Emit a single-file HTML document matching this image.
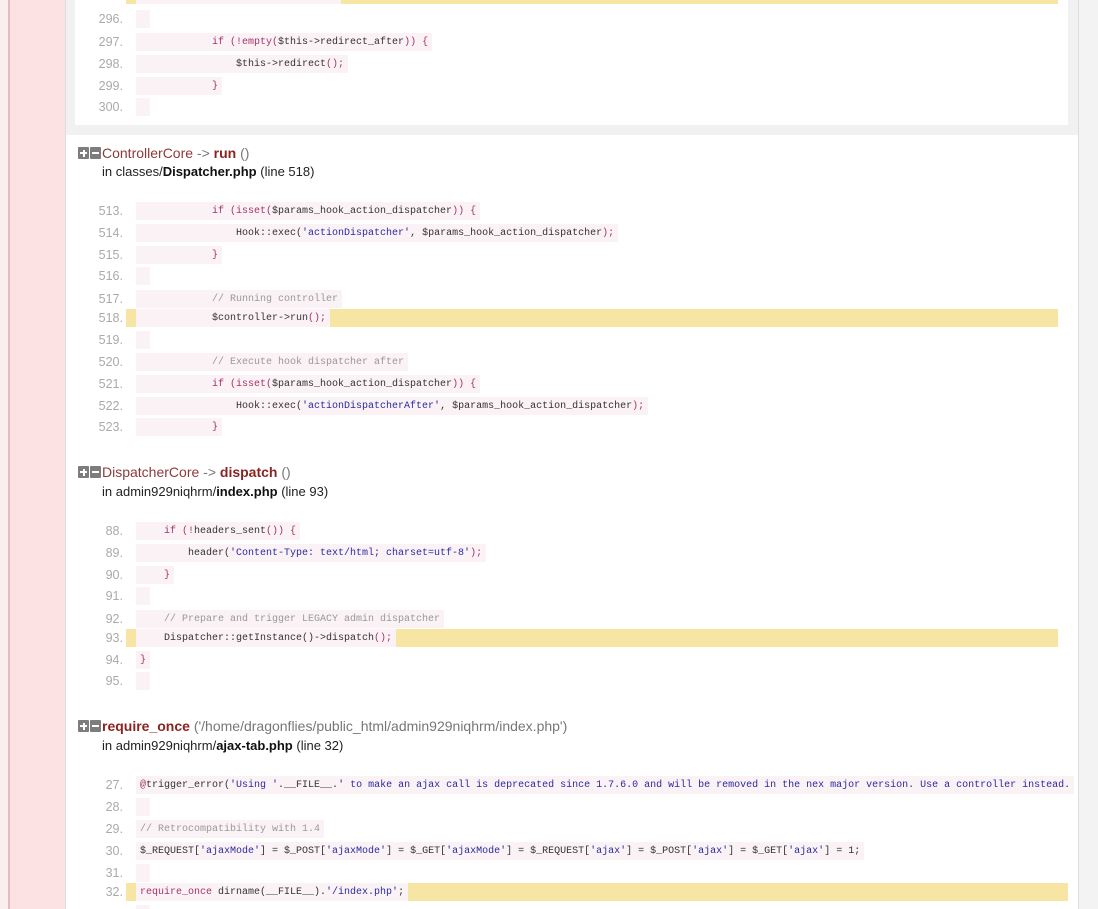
<!DOCTYPE html>
<html style="overflow:hidden"><head><meta charset="utf-8"><style>
*{margin:0;padding:0;box-sizing:border-box}
html,body{width:1098px;height:909px;overflow:hidden}
body{background:#f3f3f3;font-family:"Liberation Sans",Arial,sans-serif;position:relative}
.strip0{position:absolute;left:0;top:0;width:8px;height:909px;background:#fbeeee}
.strip1{position:absolute;left:8px;top:0;width:2px;height:909px;background:#e9b9bc}
.strip2{position:absolute;left:10px;top:0;width:55px;height:909px;background:#fde2e3}
.main{position:absolute;left:65px;top:0;width:1014px;height:909px;background:#fff;border-left:1px solid #ddd;border-right:1px solid #ddd}
.topgray{position:absolute;left:66px;top:0;width:1012px;height:135px;background:#f1f1f1}
.topwhite{position:absolute;left:75px;top:0;width:993px;height:125px;background:#fff}
.ln{position:absolute;left:0;height:18px;width:1098px;margin-top:2px}
.num{position:absolute;left:60px;width:63px;text-align:right;font-size:12.5px;color:#aaa;top:2px;font-family:"Liberation Sans",Arial,sans-serif}
.hl{position:absolute;left:126px;top:0;height:18px;background:#f7e5a3}
.code{position:absolute;left:136px;top:0;height:18px;line-height:19px;padding:0 4px;background:#faf2f4;font-family:"Liberation Mono",monospace;font-size:10px;color:#333;white-space:pre}
.k{color:#a5336c}.s{color:#2b2ba0}.c{color:#999}
.hd{position:absolute;left:78px;font-size:14px;color:#8e3a3a;white-space:nowrap}
.hd b{color:#8b2323}.hd .g{color:#777}
.icon{display:inline-block;width:23px;height:12px;vertical-align:-1px;margin-right:1px;position:relative}
.icon i{position:absolute;top:0;width:11px;height:12px;background:#7d7d7d;border-radius:1px}
.icon i.a{left:0}.icon i.b{left:12px}
.icon i.a:before{content:"";position:absolute;left:2px;top:5px;width:7px;height:2px;background:#fff}
.icon i.a:after{content:"";position:absolute;left:4.5px;top:2.5px;width:2px;height:7px;background:#fff}
.icon i.b:before{content:"";position:absolute;left:2px;top:5px;width:7px;height:2px;background:#fff}
.fl{position:absolute;left:102px;font-size:13px;color:#222;white-space:nowrap}
.fl b{color:#111}
</style></head><body>
<div class="strip0"></div><div class="strip1"></div><div class="strip2"></div>
<div class="main"></div>
<div class="topgray"></div><div class="topwhite"></div>

<div class="ln" style="top:-16px"><div class="hl" style="width:932px"></div><div class="code" style="width:205px"> </div></div>
<div class="ln" style="top:8px"><span class="num">296.</span><div class="code"> </div></div>
<div class="ln" style="top:31px"><span class="num">297.</span><div class="code"><span class="k">            if (!empty(</span>$this-&gt;redirect_after<span class="k">)) {</span></div></div>
<div class="ln" style="top:53px"><span class="num">298.</span><div class="code">                $this-&gt;redirect<span class="k">();</span></div></div>
<div class="ln" style="top:75px"><span class="num">299.</span><div class="code"><span class="k">            }</span></div></div>
<div class="ln" style="top:96px"><span class="num">300.</span><div class="code"> </div></div>

<div class="hd" style="top:145px"><span class="icon"><i class="a"></i><i class="b"></i></span>ControllerCore<span class="g"> -&gt; </span><b>run</b><span class="g"> ()</span></div>
<div class="fl" style="top:164px">in classes/<b>Dispatcher.php</b> (line 518)</div>

<div class="ln" style="top:200px"><span class="num">513.</span><div class="code"><span class="k">            if (isset(</span>$params_hook_action_dispatcher<span class="k">)) {</span></div></div>
<div class="ln" style="top:222px"><span class="num">514.</span><div class="code">                Hook::exec(<span class="s">'actionDispatcher'</span>, $params_hook_action_dispatcher<span class="k">);</span></div></div>
<div class="ln" style="top:244px"><span class="num">515.</span><div class="code"><span class="k">            }</span></div></div>
<div class="ln" style="top:265px"><span class="num">516.</span><div class="code"> </div></div>
<div class="ln" style="top:288px"><span class="num">517.</span><div class="code"><span class="c">            // Running controller</span></div></div>
<div class="ln" style="top:307px"><span class="num">518.</span><div class="hl" style="width:932px"></div><div class="code">            $controller-&gt;run<span class="k">();</span></div></div>
<div class="ln" style="top:329px"><span class="num">519.</span><div class="code"> </div></div>
<div class="ln" style="top:351px"><span class="num">520.</span><div class="code"><span class="c">            // Execute hook dispatcher after</span></div></div>
<div class="ln" style="top:373px"><span class="num">521.</span><div class="code"><span class="k">            if (isset(</span>$params_hook_action_dispatcher<span class="k">)) {</span></div></div>
<div class="ln" style="top:395px"><span class="num">522.</span><div class="code">                Hook::exec(<span class="s">'actionDispatcherAfter'</span>, $params_hook_action_dispatcher<span class="k">);</span></div></div>
<div class="ln" style="top:416px"><span class="num">523.</span><div class="code"><span class="k">            }</span></div></div>

<div class="hd" style="top:464px"><span class="icon"><i class="a"></i><i class="b"></i></span>DispatcherCore<span class="g"> -&gt; </span><b>dispatch</b><span class="g"> ()</span></div>
<div class="fl" style="top:484px">in admin929niqhrm/<b>index.php</b> (line 93)</div>

<div class="ln" style="top:520px"><span class="num">88.</span><div class="code"><span class="k">    if (!</span>headers_sent<span class="k">()) {</span></div></div>
<div class="ln" style="top:542px"><span class="num">89.</span><div class="code">        header(<span class="s">'Content-Type: text/html; charset=utf-8'</span><span class="k">);</span></div></div>
<div class="ln" style="top:564px"><span class="num">90.</span><div class="code"><span class="k">    }</span></div></div>
<div class="ln" style="top:585px"><span class="num">91.</span><div class="code"> </div></div>
<div class="ln" style="top:608px"><span class="num">92.</span><div class="code"><span class="c">    // Prepare and trigger LEGACY admin dispatcher</span></div></div>
<div class="ln" style="top:627px"><span class="num">93.</span><div class="hl" style="width:932px"></div><div class="code">    Dispatcher::getInstance()-&gt;dispatch<span class="k">();</span></div></div>
<div class="ln" style="top:649px"><span class="num">94.</span><div class="code"><span class="k">}</span></div></div>
<div class="ln" style="top:670px"><span class="num">95.</span><div class="code"> </div></div>

<div class="hd" style="top:718px"><span class="icon"><i class="a"></i><i class="b"></i></span><b>require_once</b><span class="g"> ('/home/dragonflies/public_html/admin929niqhrm/index.php')</span></div>
<div class="fl" style="top:738px">in admin929niqhrm/<b>ajax-tab.php</b> (line 32)</div>

<div class="ln" style="top:774px"><span class="num">27.</span><div class="code"><span class="k">@</span>trigger_error(<span class="s">'Using '</span>.__FILE__.<span class="s">' to make an ajax call is deprecated since 1.7.6.0 and will be removed in the nex major version. Use a controller instead.</span></div></div>
<div class="ln" style="top:796px"><span class="num">28.</span><div class="code"> </div></div>
<div class="ln" style="top:818px"><span class="num">29.</span><div class="code"><span class="c">// Retrocompatibility with 1.4</span></div></div>
<div class="ln" style="top:840px"><span class="num">30.</span><div class="code">$_REQUEST[<span class="s">'ajaxMode'</span>] = $_POST[<span class="s">'ajaxMode'</span>] = $_GET[<span class="s">'ajaxMode'</span>] = $_REQUEST[<span class="s">'ajax'</span>] = $_POST[<span class="s">'ajax'</span>] = $_GET[<span class="s">'ajax'</span>] = 1;</div></div>
<div class="ln" style="top:862px"><span class="num">31.</span><div class="code"> </div></div>
<div class="ln" style="top:881px"><span class="num">32.</span><div class="hl" style="width:942px"></div><div class="code"><span class="k">require_once</span> dirname(__FILE__).<span class="s">'/index.php'</span>;</div></div>
<div class="ln" style="top:903px"><span class="num">33.</span><div class="code"> </div></div>
</body></html>
